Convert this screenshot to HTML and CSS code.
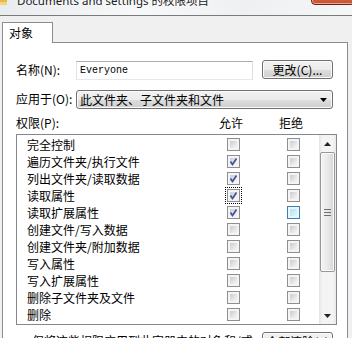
FILE: index.html
```html
<!DOCTYPE html>
<html lang="zh-CN">
<head>
    <meta charset="UTF-8">
    <title>Documents and settings 的权限项目</title>
    <link rel="stylesheet" href="styles.css">
</head>
<body>
    <div class="window">
        <!-- Title bar -->
        <div class="titlebar">
            <svg class="folder" width="8" height="8" viewBox="0 0 8 8">
                <rect x="0" y="0" width="7" height="7" fill="#e8b64a"/>
                <rect x="0" y="4" width="7" height="3" fill="#f4d47c"/>
            </svg>
            <span class="title">Documents and settings 的权限项目</span>
            <span class="close">×</span>
        </div>

        <div class="frame">
            <!-- Tabs -->
            <div class="tabs">
                <div class="tab">对象</div>
            </div>

            <!-- Tab panel -->
            <div class="panel">
                <div class="field-row">
                    <span class="label">名称(N):</span>
                    <div class="textbox">Everyone</div>
                    <button class="btn">更改(C)...</button>
                </div>

                <div class="field-row combo-row">
                    <span class="label">应用于(O):</span>
                    <div class="combo">
                        <span>此文件夹、子文件夹和文件</span>
                        <svg width="7" height="4" viewBox="0 0 7 4"><path d="M0 0 H7 L3.5 4 Z" fill="#000"/></svg>
                    </div>
                </div>

                <div class="perm-head">
                    <span>权限(P):</span>
                    <span class="col">允许</span>
                    <span class="col">拒绝</span>
                </div>

                <div class="listbox">
                    <div class="rows">
                        <div class="row"><span>完全控制</span><span class="cb"></span><span class="cb"></span></div>
                        <div class="row"><span>遍历文件夹/执行文件</span><span class="cb checked"><svg viewBox="0 0 13 13"><path d="M3.5 6.5 L5.5 9.5 L9.5 3.5"/></svg></span><span class="cb"></span></div>
                        <div class="row"><span>列出文件夹/读取数据</span><span class="cb checked"><svg viewBox="0 0 13 13"><path d="M3.5 6.5 L5.5 9.5 L9.5 3.5"/></svg></span><span class="cb"></span></div>
                        <div class="row"><span>读取属性</span><span class="cb checked focus"><svg viewBox="0 0 13 13"><path d="M3.5 6.5 L5.5 9.5 L9.5 3.5"/></svg></span><span class="cb"></span></div>
                        <div class="row"><span>读取扩展属性</span><span class="cb checked"><svg viewBox="0 0 13 13"><path d="M3.5 6.5 L5.5 9.5 L9.5 3.5"/></svg></span><span class="cb hot"></span></div>
                        <div class="row"><span>创建文件/写入数据</span><span class="cb"></span><span class="cb"></span></div>
                        <div class="row"><span>创建文件夹/附加数据</span><span class="cb"></span><span class="cb"></span></div>
                        <div class="row"><span>写入属性</span><span class="cb"></span><span class="cb"></span></div>
                        <div class="row"><span>写入扩展属性</span><span class="cb"></span><span class="cb"></span></div>
                        <div class="row"><span>删除子文件夹及文件</span><span class="cb"></span><span class="cb"></span></div>
                        <div class="row"><span>删除</span><span class="cb"></span><span class="cb"></span></div>
                    </div>
                    <!-- Scrollbar -->
                    <div class="scrollbar">
                        <div class="arrow"><svg width="7" height="4" viewBox="0 0 7 4"><path d="M3.5 0 L7 4 H0 Z" fill="#222"/></svg></div>
                        <div class="thumb">
                            <svg width="7" height="7" viewBox="0 0 7 7"><path d="M0 0.5 H7 M0 3.5 H7 M0 6.5 H7" stroke="#6f6f6f"/></svg>
                        </div>
                        <div class="track"></div>
                        <div class="arrow"><svg width="7" height="4" viewBox="0 0 7 4"><path d="M0 0 H7 L3.5 4 Z" fill="#222"/></svg></div>
                    </div>
                </div>

                <div class="bottom-row">
                    <span class="note">仅将这些权限应用到此容器中的对象和/或容器(T)</span>
                    <button class="btn">全部清除(L)</button>
                </div>
            </div>
        </div>
    </div>
</body>
</html>
```

FILE: styles.css
```css
/* General Styles */
body {
    margin: 0;
    font-family: "Noto Sans CJK SC", "Noto Sans", sans-serif;
    font-size: 12px;
    color: #000000;
    background-color: #f0f0f0;
}
.window {
    width: 352px;
    height: 338px;
    overflow: hidden;
    background-color: #f0f0f0;
}
/* Title bar */
.titlebar {
    position: relative;
    height: 15px;
    display: flex;
    align-items: flex-start;
    border-bottom: 1px solid #7a7a7a;
    background: linear-gradient(90deg, #e9ecef 0%, #f7f8f9 40%, #eef0f2 70%, #f5f6f7 100%);
    overflow: hidden;
}
.folder {
    margin-top: -2px;
    flex: none;
}
.title {
    margin-left: 9px;
    margin-top: -5px;
    font-family: "Noto Sans", "Noto Sans CJK SC", sans-serif;
    font-size: 11.5px;
    line-height: 11.5px;
    color: #1b1b1b;
    white-space: nowrap;
    text-shadow: 0 0 4px #ffffff;
}
.close {
    position: absolute;
    top: -14px;
    left: 311px;
    width: 44px;
    height: 19px;
    box-sizing: border-box;
    border: 1px solid #6b2417;
    border-radius: 0 0 4px 4px;
    background: linear-gradient(#e08a70, #c7502f);
    box-shadow: inset 0 0 0 1px #eea58e;
    color: #3c1a12;
    font-family: "DejaVu Sans", sans-serif;
    font-size: 16px;
    font-weight: bold;
    line-height: 16px;
    text-align: center;
}
/* Tabs */
.tabs {
    height: 26px;
    display: flex;
    align-items: flex-end;
    padding-left: 2px;
}
.tab {
    position: relative;
    z-index: 1;
    box-sizing: border-box;
    width: 51px;
    height: 21px;
    margin-bottom: -1px;
    padding-left: 6px;
    border: 1px solid #898c95;
    border-bottom: none;
    background-color: #ffffff;
    line-height: 19px;
}
.panel {
    box-sizing: border-box;
    width: 346px;
    height: 300px;
    margin-left: 2px;
    padding: 17px 13px 0 13px;
    border: 1px solid #898c95;
    background-color: #ffffff;
}
/* Form rows */
.field-row {
    display: flex;
    align-items: flex-start;
    height: 20px;
}
.label {
    width: 60px;
    flex: none;
    line-height: 20px;
    white-space: nowrap;
}
.textbox {
    box-sizing: border-box;
    width: 177px;
    height: 19px;
    margin-top: 1px;
    padding-left: 3px;
    border: 1px solid #abadb3;
    border-color: #abadb3 #dbdfe6 #e3e9ef #e2e3ea;
    font-family: "Liberation Mono", monospace;
    font-size: 10px;
    line-height: 17px;
}
.btn {
    box-sizing: border-box;
    width: 71px;
    height: 19px;
    margin-left: 9px;
    padding: 0;
    border: 1px solid #707070;
    border-radius: 3px;
    background: linear-gradient(#f2f2f2 0%, #ebebeb 50%, #dddddd 51%, #cfcfcf 100%);
    box-shadow: inset 0 0 0 1px #fbfbfb;
    font-family: "Noto Sans CJK SC", sans-serif;
    font-size: 12px;
    line-height: 16px;
    color: #000000;
}
.combo-row {
    margin-top: 10px;
    height: 19px;
}
.combo-row .label {
    line-height: 18px;
}
.combo {
    box-sizing: border-box;
    width: 257px;
    height: 19px;
    display: flex;
    align-items: center;
    justify-content: space-between;
    padding: 0 5px 0 3px;
    border: 1px solid #707070;
    border-radius: 3px;
    background: linear-gradient(#f2f2f2 0%, #ebebeb 50%, #dddddd 51%, #cfcfcf 100%);
    box-shadow: inset 0 0 0 1px #fbfbfb;
    line-height: 17px;
}
/* Permissions */
.perm-head {
    display: grid;
    grid-template-columns: 167px 24px 24px;
    column-gap: 36px;
    margin-top: 6px;
    height: 15px;
    line-height: 15px;
}
.perm-head .col {
    text-align: center;
}
.listbox {
    box-sizing: border-box;
    width: 321px;
    height: 191px;
    margin-top: 4px;
    display: flex;
    border: 1px solid #828790;
    background-color: #ffffff;
}
.rows {
    flex: 1;
    padding-top: 1px;
}
.row {
    display: grid;
    grid-template-columns: 153px 13px 13px;
    column-gap: 47px;
    align-items: center;
    height: 17px;
    padding-left: 10px;
    line-height: 17px;
    white-space: nowrap;
}
/* Checkboxes */
.cb {
    position: relative;
    box-sizing: border-box;
    width: 13px;
    height: 13px;
    border: 1px solid #8f8f8f;
    background-color: #f4f4f4;
}
.cb::before {
    content: "";
    position: absolute;
    left: 2px;
    top: 2px;
    width: 7px;
    height: 7px;
    background: linear-gradient(135deg, #c9ccd1 0%, #e4e6e8 60%, #f6f6f6 100%);
}
.cb svg {
    position: absolute;
    left: -1px;
    top: -1px;
    width: 13px;
    height: 13px;
    z-index: 1;
}
.cb svg path {
    fill: none;
    stroke: #3f5596;
    stroke-width: 1.7;
}
.cb.focus {
    outline: 1px dotted #000000;
    outline-offset: 1px;
}
.cb.hot {
    border-color: #3c7fb1;
    background-color: #e8f6fd;
}
.cb.hot::before {
    background: linear-gradient(135deg, #b9e2f5 0%, #cdeefa 60%, #e2f7ff 100%);
}
/* Scrollbar */
.scrollbar {
    width: 17px;
    display: flex;
    flex-direction: column;
    background: linear-gradient(90deg, #e4e4e4, #f4f4f4 20%, #f4f4f4 80%, #e8e8e8);
}
.arrow {
    height: 17px;
    display: flex;
    align-items: center;
    justify-content: center;
}
.thumb {
    box-sizing: border-box;
    height: 120px;
    margin: 0 1px;
    display: flex;
    align-items: center;
    justify-content: center;
    border: 1px solid #979797;
    border-radius: 2px;
    background: linear-gradient(90deg, #f4f4f4 0%, #e9e9e9 50%, #d6d6d6 100%);
    box-shadow: inset 0 0 0 1px #fbfbfb;
}
.track {
    flex: 1;
}
/* Bottom row */
.bottom-row {
    display: flex;
    align-items: flex-start;
    margin-top: 7px;
}
.note {
    box-sizing: border-box;
    width: 237px;
    flex: none;
    padding-left: 16px;
    line-height: 17px;
}
.bottom-row .btn {
    flex: none;
}
```
